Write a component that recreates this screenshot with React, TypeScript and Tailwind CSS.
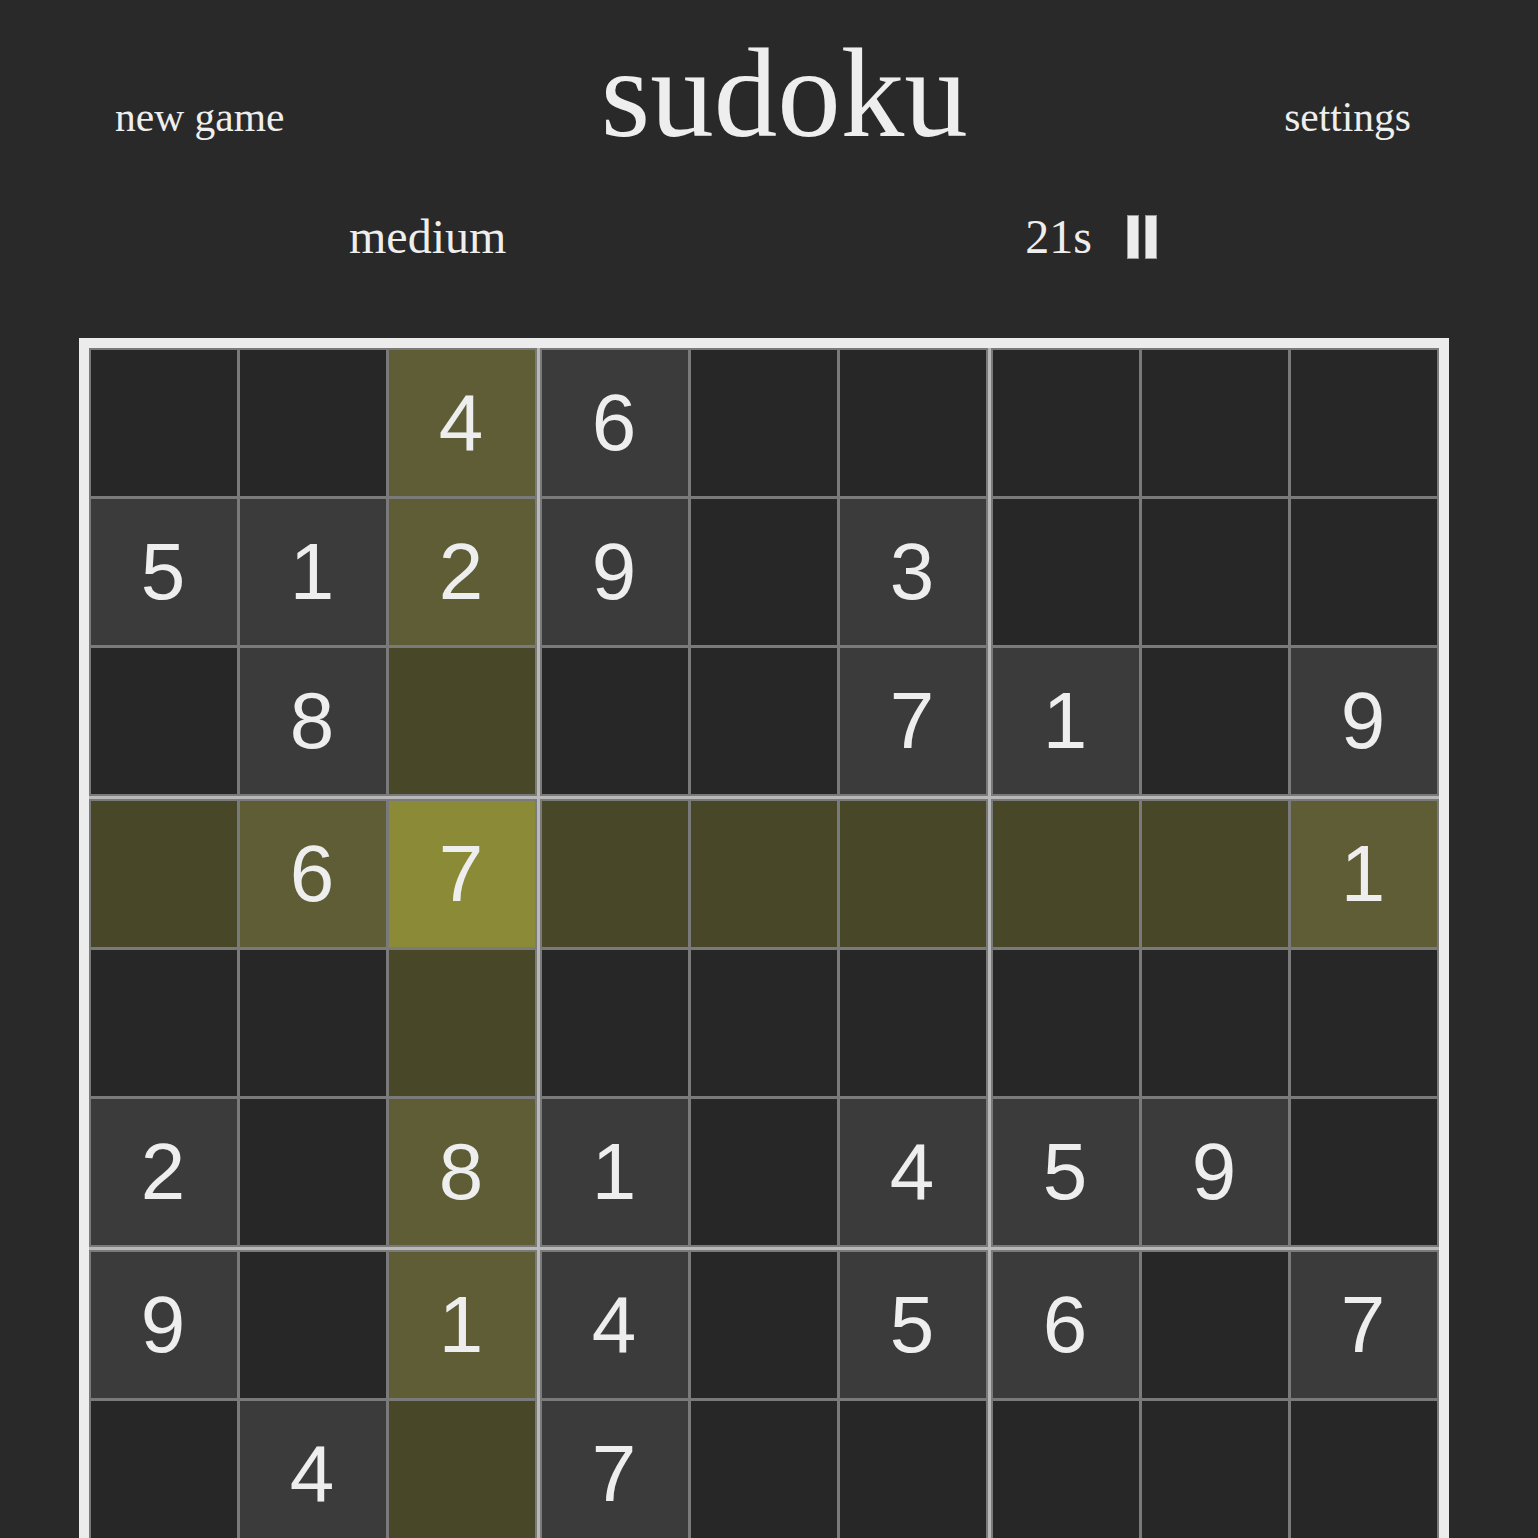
import React from "react";

// 0 = empty cell. Row 9 is below the fold in the reference.
const PUZZLE: number[][] = [
  [0, 0, 4, 6, 0, 0, 0, 0, 0],
  [5, 1, 2, 9, 0, 3, 0, 0, 0],
  [0, 8, 0, 0, 0, 7, 1, 0, 9],
  [0, 6, 7, 0, 0, 0, 0, 0, 1],
  [0, 0, 0, 0, 0, 0, 0, 0, 0],
  [2, 0, 8, 1, 0, 4, 5, 9, 0],
  [9, 0, 1, 4, 0, 5, 6, 0, 7],
  [0, 4, 0, 7, 0, 0, 0, 0, 0],
  [0, 0, 0, 0, 0, 0, 0, 0, 0],
];

const SELECTED = { row: 3, col: 2 };

const Cell = ({ row, col }: { row: number; col: number }) => {
  const value = PUZZLE[row][col];
  const selected = row === SELECTED.row && col === SELECTED.col;
  const inLine = row === SELECTED.row || col === SELECTED.col;

  let bg = value ? "bg-[#3b3b3b]" : "bg-[#272727]";
  if (inLine) bg = value ? "bg-[#5e5d35]" : "bg-[#484828]";
  if (selected) bg = "bg-[#8b8a37]";

  return (
    <div
      className={`${bg} w-[146px] h-[146px] flex items-center justify-center text-[80px] leading-none text-[#eeeeee] font-['Liberation_Sans',Arial,sans-serif]`}
    >
      {value ? <span className="-ml-[2px]">{value}</span> : ""}
    </div>
  );
};

const Box = ({ boxRow, boxCol }: { boxRow: number; boxCol: number }) => (
  <div className="grid grid-cols-3 gap-[3px] p-[2px] bg-[#7a7a7a]">
    {[0, 1, 2].flatMap((r) =>
      [0, 1, 2].map((c) => (
        <Cell key={`${r}-${c}`} row={boxRow * 3 + r} col={boxCol * 3 + c} />
      ))
    )}
  </div>
);

const PauseIcon = () => (
  <svg width="31" height="44" viewBox="0 0 31 44" className="ml-[35px]">
    <rect x="0.5" y="0.5" width="11" height="43" fill="#ececec" stroke="#9a9a9a" strokeWidth="1" />
    <rect x="18.5" y="0.5" width="11" height="43" fill="#ececec" stroke="#9a9a9a" strokeWidth="1" />
  </svg>
);

export default function App() {
  return (
    <div className="min-h-screen w-full bg-[#292929] text-[#eeeeee] font-['Liberation_Serif','Times_New_Roman',serif] overflow-hidden">
      <header className="flex items-start justify-between pl-[115px] pr-[127px] pt-[30px]">
        <button className="mt-[67px] text-[41.5px] leading-none">new game</button>
        <h1 className="text-[127px] leading-none">sudoku</h1>
        <button className="mt-[67px] text-[41.5px] leading-none">settings</button>
      </header>

      <div className="mt-[56px] flex items-center pl-[349px] text-[48px] leading-none">
        <span>medium</span>
        <div className="ml-[519px] flex items-center">
          <span>21s</span>
          <PauseIcon />
        </div>
      </div>

      <div className="mt-[77px] ml-[79px] w-fit border-[10px] border-[#ececec]">
        <div className="grid grid-cols-3 gap-[3px] bg-[#b8b8b8]">
          {[0, 1, 2].flatMap((br) =>
            [0, 1, 2].map((bc) => <Box key={`${br}-${bc}`} boxRow={br} boxCol={bc} />)
          )}
        </div>
      </div>
    </div>
  );
}
